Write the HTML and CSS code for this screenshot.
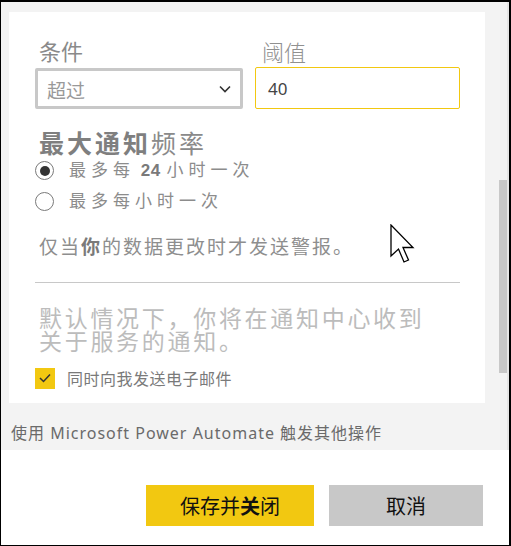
FILE: index.html
```html
<!DOCTYPE html>
<html lang="zh-CN">
<head>
<meta charset="utf-8">
<title>警报设置</title>
<link rel="stylesheet" href="styles.css">
</head>
<body>
<div class="dialog">
  <div class="scroll-area">
    <div class="content">
      <div class="panel">
        <div class="fields">
          <div class="field">
            <div class="label">条件</div>
            <div class="select">
              <span class="select-text">超过</span>
              <svg class="chevron" width="12" height="8" viewBox="0 0 12 8"><path d="M1 1.5 L6 6.5 L11 1.5" fill="none" stroke="#333" stroke-width="1.6"/></svg>
            </div>
          </div>
          <div class="field">
            <div class="label label-thin">阈值</div>
            <div class="input">40</div>
          </div>
        </div>

        <div class="heading"><b>最大通知</b>频率</div>
        <div class="radios">
          <div class="radio-row">
            <span class="radio checked"></span>
            <span class="radio-label">最多每 <b class="num">24</b> 小时一次</span>
          </div>
          <div class="radio-row">
            <span class="radio"></span>
            <span class="radio-label">最多每小时一次</span>
          </div>
        </div>

        <div class="note">仅当<b>你</b>的数据更改时才发送警报。</div>
        <div class="divider"></div>
        <div class="info">默认情况下，你将在通知中心收到关于服务的通知。</div>
        <div class="check-row">
          <span class="checkbox">
            <svg width="12" height="10" viewBox="0 0 12 10"><path d="M1 5 L4.5 8.5 L11 1.5" fill="none" stroke="#333" stroke-width="1.5"/></svg>
          </span>
          <span class="check-label">同时向我发送电子邮件</span>
        </div>
      </div>
      <div class="automate">使用 Microsoft Power Automate 触发其他操作</div>
    </div>
    <div class="track"><div class="thumb"></div></div>
  </div>
  <div class="actions">
    <button class="btn btn-primary">保存并<b>关</b>闭</button>
    <button class="btn btn-secondary">取消</button>
  </div>
  <svg class="cursor" width="26" height="40" viewBox="0 0 26 40"><path d="M1 1 L1 32 L8.5 25 L14 38 L18.5 36 L13 23.5 L23 23.5 Z" fill="#fff" stroke="#000" stroke-width="1.3" stroke-linejoin="miter"/></svg>
</div>
</body>
</html>
```

FILE: styles.css
```css
* { box-sizing: border-box; }
html, body { margin: 0; padding: 0; background: #fff; }
body {
  font-family: "Noto Sans", "Noto Sans CJK SC", sans-serif;
  color: #888;
}
b { font-weight: 700; }

.dialog {
  position: relative;
  width: 511px;
  height: 546px;
  border: 1px solid #000;
  border-top-width: 2px;
  border-right-width: 2px;
  background: #fff;
  display: flex;
  flex-direction: column;
}

.scroll-area {
  height: 448px;
  background: #f3f3f3;
  display: flex;
}
.content {
  flex: 1;
  padding: 10px 0 0 8px;
}
.panel {
  width: 476px;
  height: 391px;
  background: #fff;
  padding: 24px 25px 0 26px;
}

.fields { display: flex; gap: 12px; }
.field { display: flex; flex-direction: column; }
.field:first-child { width: 208px; }
.field:last-child { width: 205px; }
.label {
  font-size: 22px;
  line-height: 30px;
  height: 31px;
  padding-left: 4px;
  color: #8a8a8a;
}
.label-thin { padding-left: 7px; padding-top: 1px; color: #909090; font-weight: 300; }

.select {
  height: 41px;
  margin-top: 1px;
  border: 3px solid #c8c8c8;
  border-radius: 2px;
  display: flex;
  align-items: center;
  justify-content: space-between;
  padding: 0 9px 0 9px;
}
.select-text { font-size: 19px; color: #999; padding-top: 2px; }
.chevron { display: block; }
.input {
  height: 42px;
  border: 1px solid #f2c811;
  border-radius: 2px;
  font-size: 17px;
  color: #444;
  padding: 0 12px;
  display: flex;
  align-items: center;
}

.heading {
  margin-top: 20px;
  padding-left: 4px;
  font-family: "Liberation Sans", "Noto Sans CJK SC", sans-serif;
  font-size: 25px;
  line-height: 30px;
  letter-spacing: 3px;
  color: #8a8a8a;
}
.heading b { color: #7f7f7f; }

.radios { display: flex; flex-direction: column; gap: 12px; margin-top: 2px; }
.radio-row { display: flex; align-items: center; height: 19px; }
.radio {
  width: 19px;
  height: 19px;
  border: 1.5px solid #7a7a7a;
  border-radius: 50%;
  display: flex;
  align-items: center;
  justify-content: center;
  flex: none;
}
.radio.checked::after {
  content: "";
  width: 10px;
  height: 10px;
  border-radius: 50%;
  background: #333;
}
.radio-label {
  margin-left: 15px;
  font-family: "Liberation Sans", "Noto Sans CJK SC", sans-serif;
  font-size: 17px;
  line-height: 19px;
  letter-spacing: 5px;
  word-spacing: -4px;
  color: #8c8c8c;
  white-space: nowrap;
}
.radio-label .num { letter-spacing: 0.5px; color: #7a7a7a; }

.note {
  margin-top: 24px;
  padding-left: 4px;
  font-size: 19px;
  line-height: 24px;
  letter-spacing: 2px;
  color: #8e8e8e;
}
.note b { color: #7a7a7a; }

.divider {
  margin-top: 23px;
  height: 1px;
  background: #c8c8c8;
}

.info {
  margin-top: 24px;
  padding-left: 4px;
  font-size: 23px;
  line-height: 23px;
  letter-spacing: 2.7px;
  color: #bcbcbc;
  width: 410px;
}

.check-row { display: flex; align-items: center; margin-top: 13px; }
.checkbox {
  width: 20px;
  height: 21px;
  background: #f2c811;
  display: flex;
  align-items: center;
  justify-content: center;
  flex: none;
}
.checkbox svg { display: block; }
.check-label {
  margin-left: 12px;
  font-size: 16px;
  letter-spacing: 0.5px;
  color: #7a7a7a;
}

.automate {
  margin-top: 17px;
  padding-left: 2px;
  font-size: 16px;
  letter-spacing: 1px;
  color: #6a6a6a;
  white-space: nowrap;
}

.track {
  width: 10px;
  margin-left: 12px;
  background: #f3f3f3;
  border-right: 2px solid #e6e6e6;
  padding-top: 178px;
}
.thumb {
  width: 8px;
  height: 193px;
  background: #c8c8c8;
}

.actions {
  flex: 1;
  display: flex;
  justify-content: flex-end;
  gap: 15px;
  padding: 35px 26px 0 0;
}
.btn {
  height: 41px;
  border: none;
  margin: 0;
  font-family: "Noto Sans", "Noto Sans CJK SC", sans-serif;
  font-size: 20px;
  color: #111;
  padding: 0;
  cursor: pointer;
}
.btn b { font-weight: 700; }
.btn-primary { width: 168px; background: #f2c811; }
.btn-secondary { width: 154px; background: #c8c8c8; }

.cursor {
  position: absolute;
  left: 389px;
  top: 222px;
}
```
